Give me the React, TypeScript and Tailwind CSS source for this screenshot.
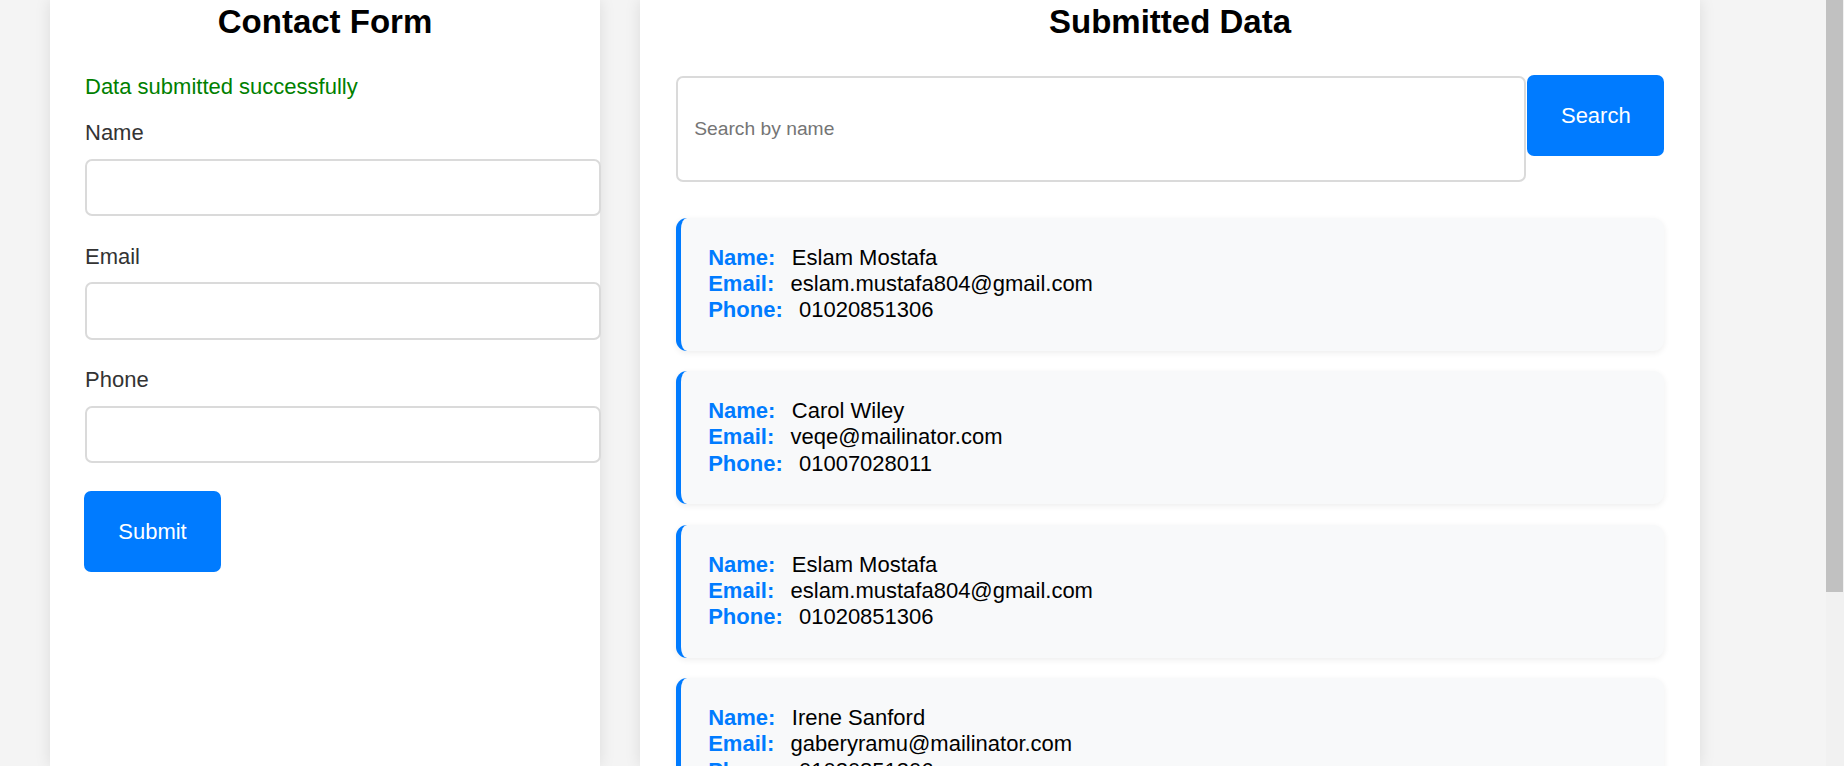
import React from "react";

const records = [
  { name: "Eslam Mostafa", email: "eslam.mustafa804@gmail.com", phone: "01020851306" },
  { name: "Carol Wiley", email: "veqe@mailinator.com", phone: "01007028011" },
  { name: "Eslam Mostafa", email: "eslam.mustafa804@gmail.com", phone: "01020851306" },
  { name: "Irene Sanford", email: "gaberyramu@mailinator.com", phone: "01020851306" },
];

function Field({ label }: { label: string }) {
  return (
    <div className="flex flex-col">
      <label className="text-[22px] leading-[25px] text-[#333]">{label}</label>
      <input
        type="text"
        className="mt-[13.5px] h-[57.5px] w-[516px] rounded-[7px] border-2 border-[#dadada] bg-white px-[16px] text-[22px] outline-none"
      />
    </div>
  );
}

export default function App() {
  return (
    <div
      className="flex h-[766px] w-[1844px] overflow-hidden bg-[#f4f4f4]"
      style={{ fontFamily: '"Liberation Sans", Arial, sans-serif' }}
    >
      <div className="flex flex-1 items-stretch gap-[40px] pl-[50px]">
        {/* Contact form card */}
        <div className="w-[550px] shrink-0 bg-white px-[35px] pt-[3px] shadow-[0_0_15px_rgba(0,0,0,0.1)]">
          <h1 className="m-0 text-center text-[33px] font-bold leading-[38px] text-black">Contact Form</h1>
          <p className="mt-[33px] text-[22px] leading-[25px] text-[#008000]">Data submitted successfully</p>
          <div className="mt-[21px] flex flex-col gap-[27.5px]">
            <Field label="Name" />
            <Field label="Email" />
            <Field label="Phone" />
          </div>
          <button className="-ml-px mt-[28px] h-[81px] w-[137px] rounded-[7px] bg-[#007bff] text-[22px] text-white">
            Submit
          </button>
        </div>

        {/* Submitted data card */}
        <div className="w-[1060px] shrink-0 bg-white pl-[35.7px] pr-[35.7px] pt-[3px] shadow-[0_0_15px_rgba(0,0,0,0.1)]">
          <h1 className="m-0 text-center text-[33px] font-bold leading-[38px] text-black">Submitted Data</h1>
          <div className="mt-[34px] flex items-start gap-[1.5px]">
            <input
              type="text"
              placeholder="Search by name"
              className="mt-px h-[106px] flex-1 rounded-[7px] border-2 border-[#dadada] bg-white px-[16.5px] text-[19.25px] text-black outline-none placeholder:text-[#757575]"
            />
            <button className="h-[81px] w-[137px] shrink-0 rounded-[7px] bg-[#007bff] text-[22px] text-white">
              Search
            </button>
          </div>
          <div className="mt-[35.7px] flex flex-col gap-[20.5px]">
            {records.map((r, i) => (
              <div
                key={i}
                className="h-[133px] shrink-0 rounded-[11px] border-l-[5.5px] border-[#007bff] bg-[#f8f9fa] pl-[27.5px] pt-[27px] text-[22px] leading-[26.3px] text-black shadow-[0_2px_6px_rgba(0,0,0,0.07)]"
              >
                <div>
                  <strong className="mr-[16.4px] font-bold text-[#007bff]">Name:</strong>
                  {r.name}
                </div>
                <div>
                  <strong className="mr-[16.4px] font-bold text-[#007bff]">Email:</strong>
                  {r.email}
                </div>
                <div>
                  <strong className="mr-[16.2px] font-bold text-[#007bff]">Phone:</strong>
                  {r.phone}
                </div>
              </div>
            ))}
          </div>
        </div>
      </div>

      {/* Scrollbar */}
      <div className="flex w-[18px] shrink-0 flex-col bg-[#f1f1f1]">
        <div className="h-[592px] w-[17px] bg-[#c1c1c1]" />
      </div>
    </div>
  );
}
